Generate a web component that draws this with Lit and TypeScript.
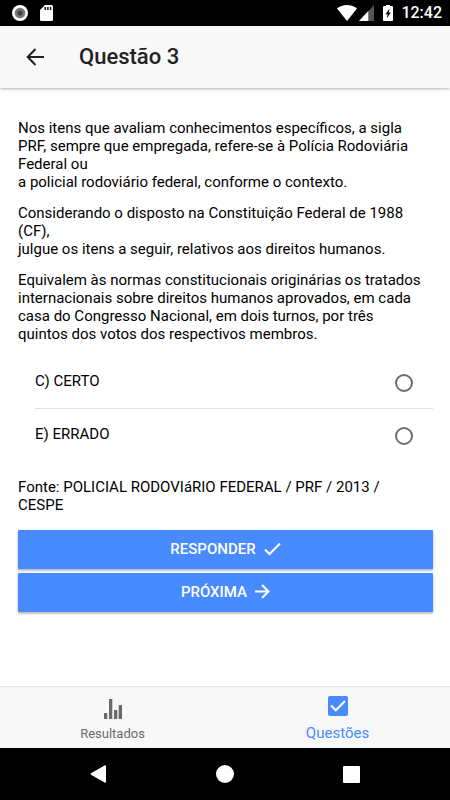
import { LitElement, html, css, svg } from "lit";
import { customElement, state } from "lit/decorators.js";

@customElement("status-bar")
class StatusBar extends LitElement {
  static styles = css`
    :host {
      display: flex;
      align-items: center;
      justify-content: space-between;
      height: 26px;
      padding: 0 8px 0 12px;
      background: #000;
      color: #fff;
      font-size: 16px;
      font-weight: 500;
    }
    .group {
      display: flex;
      align-items: center;
    }
    .left {
      gap: 12px;
    }
    .wifi {
      margin-right: 2px;
    }
    .signal {
      margin-right: 9px;
    }
    .battery {
      margin-right: 8px;
    }
    svg {
      display: block;
    }
  `;

  render() {
    return html`
      <div class="group left">
        <svg width="16" height="16" viewBox="0 0 16 16">
          <circle cx="8" cy="8" r="8" fill="#fff" />
          <circle cx="8" cy="8" r="5.3" fill="#777" />
          <circle cx="8" cy="8" r="2.6" fill="#444" />
        </svg>
        <svg width="13" height="16" viewBox="0 0 13 16">
          <path fill="#fff" d="M5 0h6.5A1.5 1.5 0 0 1 13 1.500v13a1.500 1.500 0 0 1-1.500 1.500h-10A1.500 1.500 0 0 1 0 14.500V5z" />
          <path fill="#000" d="M4.500 2h1.400v3H4.500zM7.200 2h1.400v3H7.200zM9.900 2h1.400v3H9.900z" />
        </svg>
      </div>
      <div class="group">
        <svg class="wifi" width="20" height="16" viewBox="0 0 20 16">
          <path fill="#fff" d="M10 16 0 3.500C2.600 1.300 6 0 10 0s7.400 1.300 10 3.500z" />
        </svg>
        <svg class="signal" width="15" height="16" viewBox="0 0 15 16">
          <path fill="#555" d="M15 0v16H0z" />
          <path fill="#fff" d="M9.300 6v10H0z" />
        </svg>
        <svg class="battery" width="10" height="16" viewBox="0 0 10 16">
          <path fill="#fff" d="M3 0h4v1h2a1 1 0 0 1 1 1V15a1 1 0 0 1-1 1H1a1 1 0 0 1-1-1V2a1 1 0 0 1 1-1h2z" />
          <path fill="#000" d="M6.500 3.500 5.700 7.500h2L3.800 13.500l.7-4.200h-2z" />
        </svg>
        <span>12:42</span>
      </div>
    `;
  }
}

const checkmark = svg`<path d="M1 8.500 5.500 13 16 2.500" fill="none" stroke="currentColor" stroke-width="2" />`;
const arrowRight = svg`<path d="M0 7.500h13M7 1l6.500 6.500L7 14" fill="none" stroke="currentColor" stroke-width="2" />`;

@customElement("app-root")
class AppRoot extends LitElement {
  static styles = css`
    :host {
      display: flex;
      flex-direction: column;
      min-height: 100vh;
      background: #fff;
      color: #000;
      font-family: Roboto, "Liberation Sans", sans-serif;
      font-size: 15px;
      line-height: 18px;
    }
    button {
      border: 0;
      padding: 0;
      background: none;
      color: inherit;
      font: inherit;
      cursor: pointer;
    }
    svg {
      display: block;
    }
    .header {
      display: flex;
      align-items: center;
      gap: 34px;
      height: 62px;
      padding: 0 26px;
      background: #f8f8f8;
      box-shadow: 0 1px 3px rgba(0, 0, 0, 0.3);
    }
    .title {
      margin: 0;
      color: #222;
      font-size: 22px;
      line-height: 28px;
      font-weight: 500;
    }
    .content {
      flex: 1;
      padding: 31px 17px 24px 18px;
    }
    .text {
      margin: 0 0 13px;
      padding-right: 10px;
    }
    .source {
      margin-bottom: 16px;
    }
    .options {
      margin: 0 0 17px;
      border: 0;
      padding: 0 0 0 17px;
    }
    .option {
      display: flex;
      box-sizing: border-box;
      align-items: center;
      justify-content: space-between;
      height: 53px;
      padding-right: 20px;
      border-bottom: 1px solid #dedede;
    }
    .option:last-child {
      height: 52px;
      border-bottom: 0;
    }
    .label {
      padding-bottom: 2px;
    }
    .radio {
      appearance: none;
      box-sizing: border-box;
      width: 18px;
      height: 18px;
      margin: 2px 0 0;
      border: 2px solid #6d6d6d;
      border-radius: 50%;
    }
    .radio:checked {
      border-color: #488aff;
      background: radial-gradient(#488aff 4px, transparent 5px);
    }
    .actions {
      display: flex;
      flex-direction: column;
      gap: 4px;
    }
    .action {
      display: flex;
      box-sizing: border-box;
      align-items: center;
      justify-content: center;
      gap: 8px;
      height: 39px;
      padding-bottom: 2px;
      border-radius: 1px;
      background: #488aff;
      color: #fff;
      font-weight: 500;
      box-shadow: 0 2px 2px rgba(0, 0, 0, 0.14), 0 1px 3px rgba(0, 0, 0, 0.2);
    }
    .tabs {
      display: flex;
      height: 61px;
      border-top: 1px solid #e4e4e4;
      background: #f8f8f8;
    }
    .tab {
      display: flex;
      flex: 1;
      flex-direction: column;
      align-items: center;
      justify-content: flex-end;
      gap: 6px;
      padding-bottom: 5px;
      color: #6a6a6a;
      font-size: 13px;
      text-decoration: none;
    }
    .tab.active {
      gap: 8px;
      padding-bottom: 6px;
      color: #488aff;
      font-size: 15px;
    }
    .system {
      display: flex;
      align-items: center;
      justify-content: center;
      gap: 108px;
      height: 52px;
      background: #000;
      color: #fff;
    }
  `;

  @state() answer = "";

  private option(value: string, label: string) {
    return html`
      <label class="option">
        <span class="label">${value}) ${label}</span>
        <input
          class="radio"
          type="radio"
          name="answer"
          .value=${value}
          .checked=${this.answer === value}
          @change=${() => (this.answer = value)}
        />
      </label>
    `;
  }

  render() {
    return html`
      <status-bar></status-bar>
      <header class="header">
        <button aria-label="Voltar">
          <svg width="19" height="18" viewBox="0 0 19 18" fill="none" stroke="#222" stroke-width="2">
            <path d="M18 9H2M9.500 1 1.700 9l7.800 8" />
          </svg>
        </button>
        <h1 class="title">Questão 3</h1>
      </header>
      <main class="content">
        <p class="text">
          Nos itens que avaliam conhecimentos específicos, a sigla PRF, sempre
          que empregada, refere-se à Polícia Rodoviária Federal ou<br />
          a policial rodoviário federal, conforme o contexto.
        </p>
        <p class="text">
          Considerando o disposto na Constituição Federal de 1988 (CF),<br />
          julgue os itens a seguir, relativos aos direitos humanos.
        </p>
        <p class="text">
          Equivalem às normas constitucionais originárias os tratados
          internacionais sobre direitos humanos aprovados, em cada casa do
          Congresso Nacional, em dois turnos, por três quintos dos votos dos
          respectivos membros.
        </p>
        <fieldset class="options" aria-label="Resposta">
          ${this.option("C", "CERTO")} ${this.option("E", "ERRADO")}
        </fieldset>
        <p class="text source">
          Fonte: POLICIAL RODOVIáRIO FEDERAL / PRF / 2013 / CESPE
        </p>
        <div class="actions">
          <button class="action">
            RESPONDER
            <svg width="17" height="15" viewBox="0 0 17 15">${checkmark}</svg>
          </button>
          <button class="action">
            PRÓXIMA
            <svg width="15" height="15" viewBox="0 0 15 15">${arrowRight}</svg>
          </button>
        </div>
      </main>
      <nav class="tabs">
        <a class="tab" href="#resultados">
          <svg width="18" height="20" viewBox="0 0 18 20" fill="currentColor">
            <path d="M0 14h3.300v6H0zM5 0h3.300v20H5zM10 11h3.300v9H10zM14.700 6H18v14h-3.300z" />
          </svg>
          Resultados
        </a>
        <a class="tab active" href="#questoes" aria-current="page">
          <svg width="20" height="20" viewBox="0 0 20 20">
            <rect width="20" height="20" rx="2" fill="currentColor" />
            <path d="M3 9.500 7.800 14.300 17 5" fill="none" stroke="#fff" stroke-width="2" />
          </svg>
          Questões
        </a>
      </nav>
      <footer class="system">
        <button aria-label="Voltar">
          <svg width="18" height="18" viewBox="0 0 18 18" fill="currentColor">
            <path d="M15 .3Q16 0 16 1v16q0 1-1 .7L1 9.800Q0 9 1 8.200z" />
          </svg>
        </button>
        <button aria-label="Início">
          <svg width="18" height="18" viewBox="0 0 18 18" fill="currentColor">
            <circle cx="9" cy="9" r="9" />
          </svg>
        </button>
        <button aria-label="Recentes">
          <svg width="18" height="18" viewBox="0 0 18 18" fill="currentColor">
            <rect x="1" y="1" width="17" height="17" rx="1" />
          </svg>
        </button>
      </footer>
    `;
  }
}
